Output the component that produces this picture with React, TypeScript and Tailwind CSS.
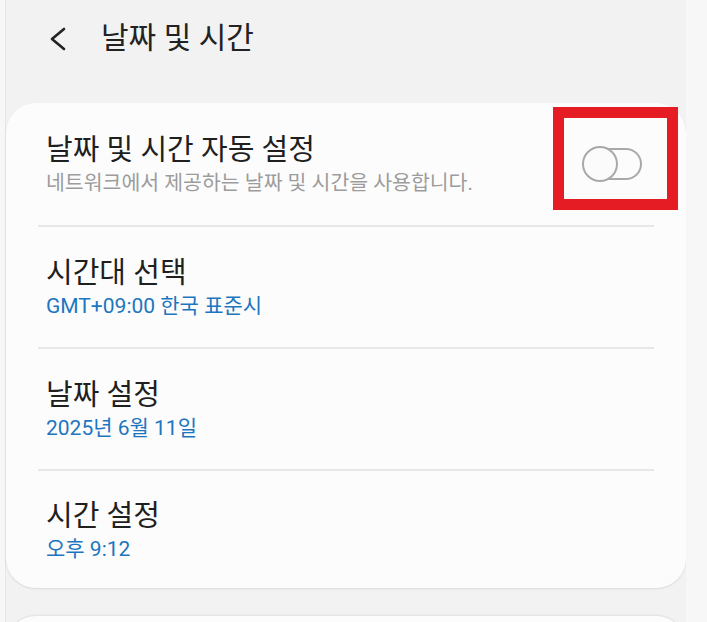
import React from 'react';

/* Samsung-style settings screen: 날짜 및 시간 */

const FONT = 'font-[Roboto,"Noto_Sans_CJK_KR",sans-serif]';

function Toggle() {
  return (
    <div className="relative h-[36px] w-[60px] shrink-0">
      {/* track */}
      <div className="absolute right-0 top-[2px] h-[32px] w-[54px] rounded-full border-2 border-[#a9a9a9] bg-[#fcfcfc]" />
      {/* knob */}
      <div className="absolute left-0 top-0 h-[36px] w-[36px] rounded-full border-2 border-[#a9a9a9] bg-[#fbfbfb]" />
      {/* highlight annotation */}
      <div className="pointer-events-none absolute -left-[29px] -top-[39px] h-[103px] w-[125px] border-[11px] border-[#e61c24]" />
    </div>
  );
}

interface RowProps {
  title: string;
  sub: string;
  subColor: 'gray' | 'blue';
  height: string;
  right?: React.ReactNode;
}

function Row({ title, sub, subColor, height, right }: RowProps) {
  return (
    <div className={`flex items-center justify-between pl-[40px] pr-[44px] ${height}`}>
      <div className="flex flex-col">
        <span className="text-[29px] leading-[36px] text-[#1f1f1f]">{title}</span>
        <span
          className={
            subColor === 'gray'
              ? 'mt-[2px] text-[20.5px] leading-[26px] text-[#9c9c9c]'
              : 'mt-[2px] text-[21px] leading-[26px] text-[#1c76bf]'
          }
        >
          {sub}
        </span>
      </div>
      {right}
    </div>
  );
}

function Divider() {
  return <div className="mx-[32px] h-[2px] bg-[#e7e7e7]" />;
}

export default function App() {
  return (
    <div className={`flex h-[622px] w-[707px] overflow-hidden bg-[#f2f2f2] ${FONT}`}>
      {/* left edge strip */}
      <div className="w-[6px] shrink-0 border-r border-[#e6e6e6] bg-[#f7f7f7]" />

      <div className="flex min-w-0 flex-1 flex-col">
        {/* ── Header ── */}
        <div className="flex h-[103px] shrink-0 items-start pt-[19px]">
          <svg
            className="ml-[41px] mt-[8px]"
            width="22"
            height="24"
            viewBox="0 0 22 24"
            fill="none"
            stroke="#222"
            strokeWidth="2.6"
            strokeLinecap="round"
            strokeLinejoin="round"
          >
            <path d="M17 2 L5 12 L17 22" />
          </svg>
          <span className="ml-[32px] text-[30px] leading-[38px] text-[#222]">날짜 및 시간</span>
        </div>

        {/* ── Settings card ── */}
        <div className="shrink-0 rounded-[30px] bg-[#fcfcfc] shadow-[0_1px_2px_rgba(0,0,0,0.1)]">
          <Row
            title="날짜 및 시간 자동 설정"
            sub="네트워크에서 제공하는 날짜 및 시간을 사용합니다."
            subColor="gray"
            height="h-[122px]"
            right={<Toggle />}
          />
          <Divider />
          <Row title="시간대 선택" sub="GMT+09:00 한국 표준시" subColor="blue" height="h-[120px]" />
          <Divider />
          <Row title="날짜 설정" sub="2025년 6월 11일" subColor="blue" height="h-[120px]" />
          <Divider />
          <Row title="시간 설정" sub="오후 9:12" subColor="blue" height="h-[117px]" />
        </div>

        {/* next card peeking in */}
        <div className="mt-[28px] h-[60px] shrink-0 rounded-[30px] bg-[#fcfcfc] shadow-[0_-1px_2px_rgba(0,0,0,0.08)]" />
      </div>

      {/* right edge strip */}
      <div className="w-[21px] shrink-0 bg-[#f7f7f7]" />
    </div>
  );
}
